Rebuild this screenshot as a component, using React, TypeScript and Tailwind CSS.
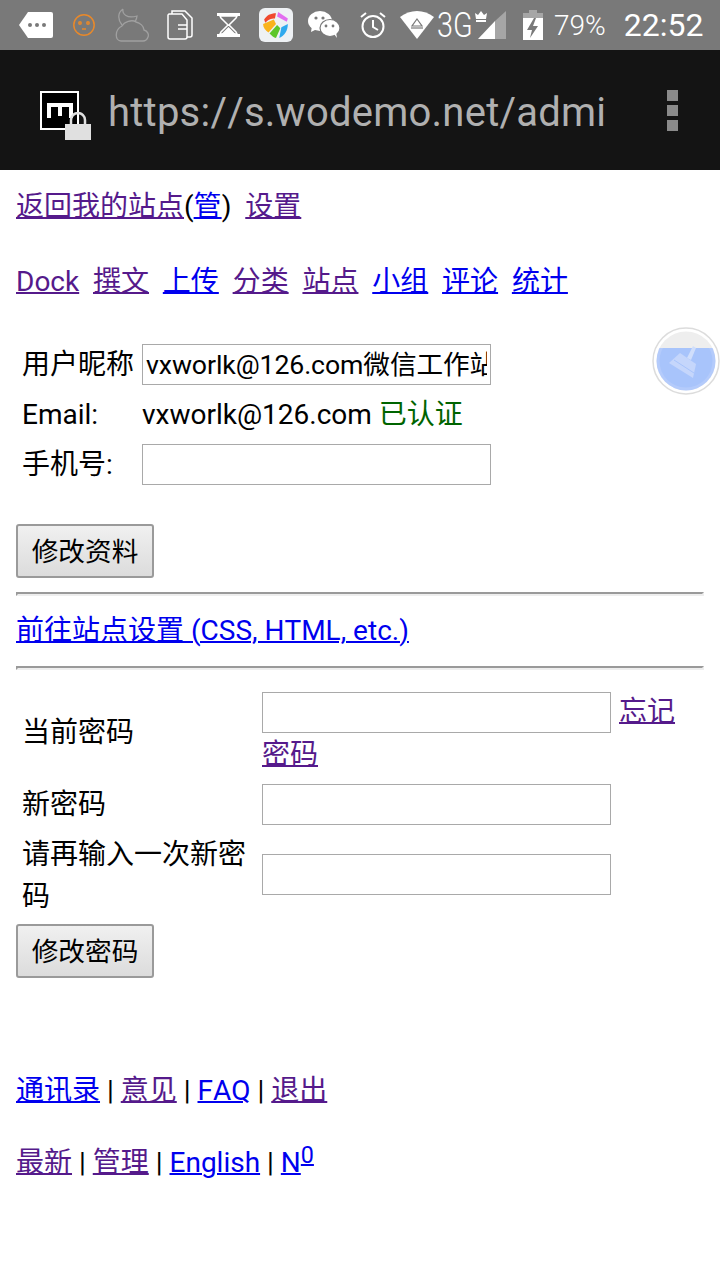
import React from "react";

const cjk = "font-['Roboto','Noto_Sans_CJK_SC',sans-serif] [font-kerning:none]";

function StatusIcons() {
  return (
    <div className="flex items-center h-[50px] bg-[#797979]">
      {/* notification tag */}
      <svg className="ml-[19px]" width="34" height="26" viewBox="0 0 34 26">
        <path d="M9 0H32a2 2 0 0 1 2 2V24a2 2 0 0 1-2 2H9L0 13z" fill="#fff" />
        <circle cx="11" cy="13" r="2" fill="#797979" />
        <circle cx="18" cy="13" r="2" fill="#797979" />
        <circle cx="25" cy="13" r="2" fill="#797979" />
      </svg>
      {/* face */}
      <svg className="ml-[20px]" width="22" height="22" viewBox="0 0 22 22" fill="none" stroke="#e8892b" strokeWidth="1.5">
        <circle cx="11" cy="11" r="10.2" />
        <circle cx="7" cy="9" r="1.2" />
        <circle cx="15" cy="9" r="1.2" />
        <path d="M9 15h4" />
      </svg>
      {/* moon and cloud */}
      <svg className="ml-[20px]" width="34" height="34" viewBox="0 0 34 34" fill="none" stroke="#a0a0a0" strokeWidth="1.3">
        <path d="M8 1C2 5 3 12 7 17M8 1C7 6 12 11 22 8 22 10 21 12 20 14" />
        <path d="M6 33C0 33-1 22 7 18 9 14 17 11 21 14 25 15 29 18 29 22 33 23 34 27 33 29 32 32 30 33 28 33Z" />
      </svg>
      {/* documents */}
      <svg className="ml-[18px]" width="26" height="30" viewBox="0 0 26 30" fill="none" stroke="#fff" strokeWidth="1.5">
        <path d="M5 4V1h13l7 7v17a2 2 0 0 1-2 2h-3" />
        <path d="M2 4h13l5 6v17a2 2 0 0 1-2 2H3a2 2 0 0 1-2-2V5z" />
        <path d="M11 15h9M11 19h9" />
      </svg>
      {/* hourglass */}
      <svg className="ml-[24px]" width="23" height="24" viewBox="0 0 23 24" fill="#fff">
        <path d="M0 0h23v3H0zM0 21h23v3H0z" />
        <path d="M3 3h17l-1 2-7 7 7 7 1 2H3l1-2 7-7-7-7z" fill="none" stroke="#fff" strokeWidth="1.5" />
        <path d="M11.5 14l-7 7h14z" />
      </svg>
      {/* app tile */}
      <div className="ml-[19px] w-[34px] h-[34px] rounded-[6px] bg-[#eef1f4] flex items-center justify-center">
        <svg width="28" height="28" viewBox="0 0 26 26">
          <path d="M2 8c2-4 6-6 11-6l-1 5C8 7 6 8 3 11z" fill="#f0492e" />
          <path d="M1 12l10-4 2 4-7 8c-3-2-5-5-5-8z" fill="#f9b31c" />
          <path d="M7 21l7-8 3 3-4 9c-2 0-4-2-6-4z" fill="#5cc62a" />
          <path d="M18 15l6-3c0 6-3 11-8 13z" fill="#2fa9ee" />
          <path d="M15 1l9 6-1 3-9-5z" fill="#e26df0" />
        </svg>
      </div>
      {/* wechat */}
      <svg className="ml-[15px]" width="32" height="28" viewBox="0 0 32 28" fill="#fff">
        <ellipse cx="12" cy="10" rx="12" ry="10" />
        <path d="M4 15l-1 6 6-3z" />
        <ellipse cx="22" cy="17" rx="10" ry="8.5" stroke="#797979" strokeWidth="1.2" />
        <path d="M26 23l3 4-1-6z" />
        <circle cx="8" cy="7" r="1.6" fill="#797979" />
        <circle cx="15" cy="7" r="1.6" fill="#797979" />
        <circle cx="18" cy="15" r="1.4" fill="#797979" />
        <circle cx="25" cy="15" r="1.4" fill="#797979" />
      </svg>
      {/* alarm */}
      <svg className="ml-[20px]" width="26" height="28" viewBox="0 0 26 28" fill="none" stroke="#fff" strokeWidth="2">
        <circle cx="13" cy="15.5" r="10.5" />
        <path d="M13 9v7l5 3M1 6l5-4M25 6l-5-4" />
      </svg>
      {/* wifi */}
      <svg className="ml-[14px]" width="34" height="28" viewBox="0 0 34 28">
        <path d="M0 6c10-8 24-8 34 0L17 28z" fill="#fff" />
        <path d="M17 8l5 7H12z" fill="none" stroke="#797979" strokeWidth="1.2" />
        <path d="M11 17h12" stroke="#797979" strokeWidth="1.2" />
      </svg>
      <span className="ml-[3px] w-[37px] text-[35px] leading-none text-white font-['Roboto',sans-serif] font-light origin-left scale-x-[0.82] whitespace-nowrap">3G</span>
      {/* crown and signal */}
      <svg className="ml-[1px] mt-[-1px]" width="31" height="30" viewBox="0 0 31 30">
        <path d="M31 1v28H20V11z" fill="#a6a6a6" />
        <path d="M20 11v18H3z" fill="#fff" />
        <path d="M0 3l3 2 3-4 3 4 3-2-1 6H1zM1 10h10v2H1z" fill="#fff" />
      </svg>
      {/* battery */}
      <svg className="ml-[17px]" width="20" height="30" viewBox="0 0 20 30">
        <path d="M6 0h8v3h6v6H0V3h6z" fill="#a6a6a6" />
        <path d="M0 8h20v22H0z" fill="#fff" />
        <path d="M11 8L4 20h5l-2 8 8-12h-5l3-8z" fill="#797979" />
      </svg>
      <span className="ml-[11px] mt-[2px] text-[28px] leading-none text-white font-['Roboto',sans-serif] font-light">79%</span>
      <span className="ml-[18px] text-[32px] leading-none text-white font-['Roboto',sans-serif]">22:52</span>
    </div>
  );
}

function Toolbar() {
  return (
    <div className="flex items-center h-[120px] bg-[#141414] pl-[40px]">
      <div className="relative w-[39px] h-[39px] border-2 border-white bg-black flex-none">
        <svg className="absolute left-[5px] top-[10px]" width="26" height="15" viewBox="0 0 26 15" fill="#fff">
          <path d="M0 0h26v15h-4V4h-7v9h-4V4H4v11H0z" />
        </svg>
        <svg className="absolute left-[22px] top-[19px]" width="28" height="29" viewBox="0 0 28 29">
          <path d="M7 13V8a7 7 0 0 1 14 0v5" fill="none" stroke="#e0e0e0" strokeWidth="2.5" />
          <path d="M1 12h26v16H1z" fill="#e0e0e0" />
        </svg>
      </div>
      <span className="ml-[29px] mt-[6px] text-[40px] leading-none tracking-[0.24px] text-[#b0b0b0] font-['Roboto',sans-serif] whitespace-nowrap">
        https://s.wodemo.net/admi
      </span>
      <div className="ml-[61px] flex flex-col gap-[4px]">
        <div className="w-[11px] h-[11px] bg-[#8a8a8a]" />
        <div className="w-[11px] h-[11px] bg-[#8a8a8a]" />
        <div className="w-[11px] h-[11px] bg-[#8a8a8a]" />
      </div>
    </div>
  );
}

function A({ children, visited }: { children: React.ReactNode; visited?: boolean }) {
  return <a className={visited ? "underline decoration-2 text-[#551a8b]" : "underline decoration-2 text-[#0000ee]"}>{children}</a>;
}

function Input({ value }: { value?: string }) {
  return (
    <div className="w-[349px] h-[41px] border border-[#a9a9a9] bg-white px-[3px] text-[26.67px] tracking-[-0.1px] flex items-center whitespace-nowrap text-[#000]">
      <span className="block w-full overflow-hidden">{value}</span>
    </div>
  );
}

function Button({ children }: { children: React.ReactNode }) {
  return (
    <button className="block w-[138px] h-[54px] pt-[2px] border-2 border-[#9a9a9a] rounded-[3px] bg-gradient-to-b from-[#f0f0f0] to-[#dcdcdc] text-black text-[26.67px] leading-none">
      {children}
    </button>
  );
}

function Rule() {
  return <div className="h-[4px] border-2 border-t-[#9a9a9a] border-l-[#9a9a9a] border-r-[#eeeeee] border-b-[#eeeeee]" />;
}

export default function App() {
  return (
    <div className={`relative w-[720px] h-[1280px] overflow-hidden bg-white text-black text-[28px] leading-[32px] ${cjk}`}>
      <StatusIcons />
      <Toolbar />

      <div className="px-[16px]">
        <p className="mt-[21px]">
          <A visited>返回我的站点</A>(<A>管</A>)&nbsp; <A visited>设置</A>
        </p>
        <p className="mt-[43px] flex gap-[13.8px]">
          <A visited>Dock</A>
          <A visited>撰文</A>
          <A>上传</A>
          <A visited>分类</A>
          <A visited>站点</A>
          <A>小组</A>
          <A>评论</A>
          <A>统计</A>
        </p>

        <div className="mt-[46px] pl-[6px] flex flex-col">
          <div className="flex items-center h-[41px]">
            <span className="w-[120px]">用户昵称</span>
            <Input value="vxworlk@126.com微信工作站" />
          </div>
          <div className="flex items-center h-[32px] mt-[14px]">
            <span className="w-[120px]">Email:</span>
            <span>
              vxworlk@126.com <span className="text-[#006400]">已认证</span>
            </span>
          </div>
          <div className="flex items-center h-[41px] mt-[13px]">
            <span className="w-[120px]">手机号:</span>
            <Input />
          </div>
        </div>

        <div className="mt-[39px]">
          <Button>修改资料</Button>
        </div>

        <div className="mt-[14px]"><Rule /></div>
        <p className="mt-[19px]"><A>前往站点设置 (CSS, HTML, etc.)</A></p>
        <div className="mt-[19px]"><Rule /></div>

        <div className="mt-[22px] pl-[6px] flex flex-col">
          <div className="flex">
            <span className="w-[240px] mt-[25px] flex-none self-start">当前密码</span>
            <div className="flex-1">
              <div className="flex items-start">
                <Input />
                <span className="ml-[8px] mt-[4px]"><A visited>忘记</A></span>
              </div>
              <div className="mt-[6px]"><A visited>密码</A></div>
            </div>
          </div>
          <div className="flex items-center mt-[13px]">
            <span className="w-[240px] flex-none pt-[1px]">新密码</span>
            <Input />
          </div>
          <div className="flex items-center mt-[5px]">
            <span className="w-[240px] flex-none pt-[4px] leading-[42px]">请再输入一次新密码</span>
            <Input />
          </div>
        </div>

        <div className="mt-[6px]">
          <Button>修改密码</Button>
        </div>

        <p className="mt-[97px]">
          <A>通讯录</A> | <A visited>意见</A> | <A>FAQ</A> | <A visited>退出</A>
        </p>
        <p className="mt-[40px]">
          <A visited>最新</A> | <A visited>管理</A> | <A>English</A> | <A>N</A>
          <sup className="text-[23.3px] top-[-0.4em] underline decoration-2 text-[#0000ee]">0</sup>
        </p>
      </div>

      {/* floating cleaner ball */}
      <svg className="absolute left-[652px] top-[327px]" width="68" height="68" viewBox="0 0 68 68">
        <defs>
          <clipPath id="ball-fill">
            <rect x="0" y="21" width="68" height="47" />
          </clipPath>
        </defs>
        <circle cx="34" cy="34" r="33" fill="#fff" stroke="#dcdcdc" strokeWidth="1.5" />
        <circle cx="34" cy="34" r="29.5" fill="#eeeeee" />
        <g clipPath="url(#ball-fill)">
          <circle cx="34" cy="34" r="29.5" fill="#b4cbfb" />
          <circle cx="34" cy="34" r="26.5" fill="#a8c4fb" />
        </g>
        <path d="M35 31l6-12 3 2-5 12z" fill="#d0defb" />
        <path d="M28 26l16 11-3 14-24-15z" fill="#c5d6fb" />
        <path d="M22 33l20 13" stroke="#a8c4fb" strokeWidth="1" />
      </svg>
    </div>
  );
}
